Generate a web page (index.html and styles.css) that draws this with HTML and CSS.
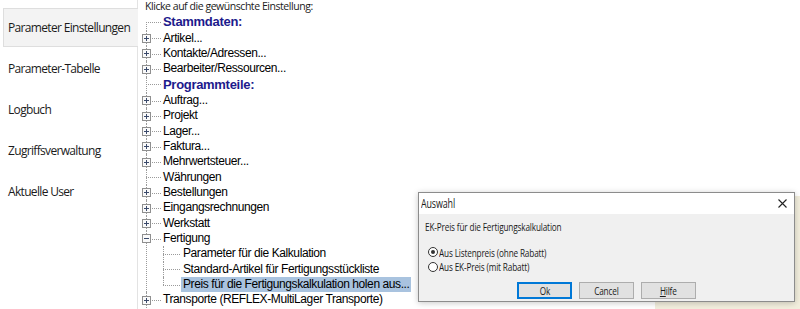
FILE: index.html
```html
<!DOCTYPE html>
<html lang="de">
<head>
<meta charset="utf-8">
<title>Parameter Einstellungen</title>
<link rel="stylesheet" href="styles.css">
</head>
<body>
<div class="app">
  <nav class="nav">
    <div class="nav-item active">Parameter Einstellungen</div>
    <div class="nav-item">Parameter-Tabelle</div>
    <div class="nav-item">Logbuch</div>
    <div class="nav-item">Zugriffsverwaltung</div>
    <div class="nav-item">Aktuelle User</div>
  </nav>
  <main class="main">
    <div class="hint">Klicke auf die gewünschte Einstellung:</div>
    <ul class="tree">
      <li class="first"><span class="head">Stammdaten:</span></li>
      <li><svg class="box" viewBox="0 0 9 9"><rect x="0.5" y="0.5" width="8" height="8"/><path d="M2 4.5h5M4.5 2v5"/></svg>Artikel...</li>
      <li><svg class="box" viewBox="0 0 9 9"><rect x="0.5" y="0.5" width="8" height="8"/><path d="M2 4.5h5M4.5 2v5"/></svg>Kontakte/Adressen...</li>
      <li><svg class="box" viewBox="0 0 9 9"><rect x="0.5" y="0.5" width="8" height="8"/><path d="M2 4.5h5M4.5 2v5"/></svg>Bearbeiter/Ressourcen...</li>
      <li><span class="head">Programmteile:</span></li>
      <li><svg class="box" viewBox="0 0 9 9"><rect x="0.5" y="0.5" width="8" height="8"/><path d="M2 4.5h5M4.5 2v5"/></svg>Auftrag...</li>
      <li><svg class="box" viewBox="0 0 9 9"><rect x="0.5" y="0.5" width="8" height="8"/><path d="M2 4.5h5M4.5 2v5"/></svg>Projekt</li>
      <li><svg class="box" viewBox="0 0 9 9"><rect x="0.5" y="0.5" width="8" height="8"/><path d="M2 4.5h5M4.5 2v5"/></svg>Lager...</li>
      <li><svg class="box" viewBox="0 0 9 9"><rect x="0.5" y="0.5" width="8" height="8"/><path d="M2 4.5h5M4.5 2v5"/></svg>Faktura...</li>
      <li><svg class="box" viewBox="0 0 9 9"><rect x="0.5" y="0.5" width="8" height="8"/><path d="M2 4.5h5M4.5 2v5"/></svg>Mehrwertsteuer...</li>
      <li>Währungen</li>
      <li><svg class="box" viewBox="0 0 9 9"><rect x="0.5" y="0.5" width="8" height="8"/><path d="M2 4.5h5M4.5 2v5"/></svg>Bestellungen</li>
      <li><svg class="box" viewBox="0 0 9 9"><rect x="0.5" y="0.5" width="8" height="8"/><path d="M2 4.5h5M4.5 2v5"/></svg>Eingangsrechnungen</li>
      <li><svg class="box" viewBox="0 0 9 9"><rect x="0.5" y="0.5" width="8" height="8"/><path d="M2 4.5h5M4.5 2v5"/></svg>Werkstatt</li>
      <li><svg class="box" viewBox="0 0 9 9"><rect x="0.5" y="0.5" width="8" height="8"/><path d="M2 4.5h5"/></svg>Fertigung
        <ul class="sub">
          <li>Parameter für die Kalkulation</li>
          <li>Standard-Artikel für Fertigungsstückliste</li>
          <li class="last"><span class="selected">Preis für die Fertigungskalkulation holen aus...</span></li>
        </ul>
      </li>
      <li><svg class="box" viewBox="0 0 9 9"><rect x="0.5" y="0.5" width="8" height="8"/><path d="M2 4.5h5M4.5 2v5"/></svg>Transporte (REFLEX-MultiLager Transporte)</li>
    </ul>
  </main>
</div>

<div class="backdrop-window"></div>

<div class="dialog">
  <div class="titlebar">
    <span class="title sq">Auswahl</span>
    <svg class="close" viewBox="0 0 9 9"><path d="M0.5 0.5L8.5 8.5M8.5 0.5L0.5 8.5"/></svg>
  </div>
  <div class="dialog-body">
    <div class="prompt"><span class="sq">EK-Preis für die Fertigungskalkulation</span></div>
    <div class="radios">
      <div class="radio"><span class="dot checked"></span><span class="sq">Aus Listenpreis (ohne Rabatt)</span></div>
      <div class="radio"><span class="dot"></span><span class="sq">Aus EK-Preis (mit Rabatt)</span></div>
    </div>
    <div class="buttons">
      <div class="btn default"><span class="sq mid">Ok</span></div>
      <div class="btn"><span class="sq mid">Cancel</span></div>
      <div class="btn"><span class="sq mid"><u>H</u>ilfe</span></div>
    </div>
  </div>
</div>
</body>
</html>
```

FILE: styles.css
```css
* { box-sizing: border-box; }
html, body { margin: 0; padding: 0; background: #fff; }
body { width: 800px; height: 309px; overflow: hidden; position: relative; }

.app { display: flex; height: 309px; }

.nav {
  width: 138px;
  flex: none;
  padding: 8px 0 0 3px;
  border-right: 1px solid #e3e3e3;
  font-family: "Open Sans", "Noto Sans", sans-serif;
  font-size: 12px;
  color: #1b1b1b;
  letter-spacing: -0.67px;
}
.nav-item {
  height: 39px;
  margin-bottom: 2px;
  display: flex;
  align-items: center;
  padding-left: 5px;
  white-space: nowrap;
}
.nav-item.active {
  background: #f3f3f3;
  border: 1px solid #dedede;
  border-right: none;
  margin-right: -1px;
  padding-left: 4px;
}

.main { flex: 1; padding-left: 8px; }

.hint {
  font-family: "Open Sans", "Noto Sans", sans-serif;
  font-size: 10.5px;
  line-height: 12px;
  margin-top: 0;
  margin-left: -1px;
  letter-spacing: -0.45px;
  color: #1b1b1b;
}

.tree {
  --row: 15.33px;
  list-style: none;
  margin: 2.33px 0 0 0;
  padding: 0;
  font-family: "Liberation Sans", Arial, sans-serif;
  font-size: 12px;
  letter-spacing: -0.41px;
  color: #000;
}
.tree li {
  position: relative;
  padding-left: 17px;
  line-height: var(--row);
  min-height: var(--row);
  white-space: nowrap;
}
.tree li::before {
  content: "";
  position: absolute;
  left: 0;
  top: 0;
  height: 100%;
  border-left: 1px dotted #9a9a9a;
}
.tree li.first::before { top: 7.67px; height: calc(100% - 7.67px); }
.tree li::after {
  content: "";
  position: absolute;
  left: 0;
  top: 7.67px;
  width: 15px;
  border-top: 1px dotted #9a9a9a;
}

.head {
  color: #1d1a8c;
  font-weight: bold;
  font-size: 13px;
  letter-spacing: -0.3px;
}

.box {
  position: absolute;
  left: -4px;
  top: 3.5px;
  width: 9px;
  height: 9px;
  z-index: 1;
}
.box rect { fill: #fafafa; stroke: #8f8f8f; stroke-width: 1; }
.box path { stroke: #3b4a6b; stroke-width: 1; fill: none; }

.sub { list-style: none; margin: 0; padding: 0; }
.sub li { padding-left: 20px; }
.sub li::after { width: 17px; }
.sub li.last::before { height: 8px; }

.selected {
  background: #a9c3df;
  margin-left: -2px;
  padding: 0 2px 0 2px;
  display: inline-block;
}

.backdrop-window {
  position: absolute;
  left: 655px;
  top: 196px;
  right: 0;
  bottom: 0;
  background: #f2eedd;
}

.dialog {
  position: absolute;
  left: 418px;
  top: 192px;
  width: 377px;
  height: 110px;
  background: #f0f0f0;
  border: 1px solid #8c8c8c;
  box-shadow: 0 1px 6px rgba(0,0,0,0.22);
  font-family: "Open Sans", "Noto Sans", sans-serif;
  font-size: 11px;
  color: #1b1b1b;
  letter-spacing: -0.2px;
}
.sq {
  display: inline-block;
  white-space: nowrap;
  transform: scaleX(0.745);
  transform-origin: left center;
}
.sq.mid { transform-origin: center center; }

.titlebar {
  height: 21px;
  background: #fff;
  display: flex;
  align-items: center;
  justify-content: space-between;
  padding: 0 7px 0 2px;
}
.title { font-size: 12px; }
.close { width: 9px; height: 9px; }
.close path { stroke: #222; stroke-width: 1.1; fill: none; }

.dialog-body { padding: 6px 0 0 6px; }
.prompt { line-height: 14px; }
.radios { margin-top: 11px; }
.radio {
  display: flex;
  align-items: center;
  height: 14.5px;
  margin-left: 3px;
}
.dot {
  flex: none;
  width: 10px;
  height: 10px;
  border: 1px solid #333;
  border-radius: 50%;
  background: #fff;
  margin-right: 1px;
  display: inline-flex;
  align-items: center;
  justify-content: center;
}
.dot.checked::after {
  content: "";
  width: 4px;
  height: 4px;
  border-radius: 50%;
  background: #333;
}

.buttons {
  display: flex;
  justify-content: center;
  gap: 7px;
  margin-top: 8px;
  margin-left: -6px;
}
.btn {
  width: 55px;
  height: 17px;
  background: #e1e1e1;
  border: 1px solid #adadad;
  display: flex;
  align-items: center;
  justify-content: center;
}
.btn.default { border: 1px solid #0078d7; box-shadow: inset 0 0 0 1px #0078d7; }
```
